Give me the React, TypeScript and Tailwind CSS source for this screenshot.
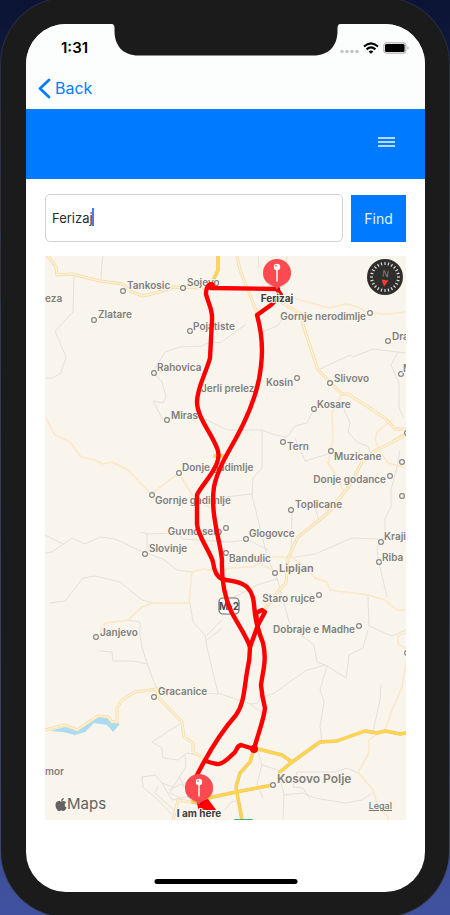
import React from "react";
import { FaApple } from "react-icons/fa";

type Place = {
  name: string;
  x: number;
  y: number;
  dot?: [number, number];
  end?: boolean;
  size?: number;
};

const places: Place[] = [
  { name: "Tankosic", x: 127, y: 289, dot: [123, 291] },
  { name: "Sojevo", x: 187, y: 286, dot: [183, 288] },
  { name: "eza", x: 45, y: 302 },
  { name: "Zlatare", x: 98, y: 318, dot: [94, 320] },
  { name: "Pojatiste", x: 193, y: 330, dot: [190, 331] },
  { name: "Rahovica", x: 157, y: 371, dot: [154, 373] },
  { name: "Jerli prelez", x: 201, y: 392 },
  { name: "Miras", x: 171, y: 419, dot: [167, 420] },
  { name: "Kosin", x: 293, y: 386, dot: [297, 378], end: true },
  { name: "Gornje nerodimlje", x: 366, y: 320, dot: [370, 313], end: true },
  { name: "Dra", x: 392, y: 340, dot: [388, 341] },
  { name: "N", x: 403, y: 372, dot: [401, 374] },
  { name: "Slivovo", x: 334, y: 382, dot: [330, 383] },
  { name: "Kosare", x: 317, y: 408, dot: [314, 409] },
  { name: "", x: 0, y: 0, dot: [407, 433] },
  { name: "Tern", x: 287, y: 450, dot: [283, 442] },
  { name: "Muzicane", x: 334, y: 460, dot: [331, 451] },
  { name: "Donje godance", x: 386, y: 483, dot: [390, 476], end: true },
  { name: "", x: 0, y: 0, dot: [402, 462] },
  { name: "", x: 0, y: 0, dot: [402, 496] },
  { name: "Toplicane", x: 295, y: 508, dot: [291, 510] },
  { name: "Glogovce", x: 249, y: 537, dot: [246, 539] },
  { name: "Bandulic", x: 229, y: 562, dot: [226, 553] },
  { name: "Guvno selo", x: 222, y: 535, dot: [226, 528], end: true },
  { name: "Lipljan", x: 279, y: 572, dot: [275, 573], size: 11 },
  { name: "Kraji", x: 384, y: 540, dot: [381, 542] },
  { name: "Riba", x: 382, y: 561, dot: [379, 562] },
  { name: "Staro rujce", x: 315, y: 602, dot: [319, 595], end: true },
  { name: "Dobraje e Madhe", x: 355, y: 633, dot: [359, 626], end: true },
  { name: "Donje gadimlje", x: 182, y: 471, dot: [179, 473] },
  { name: "Gornje gadimlje", x: 155, y: 504, dot: [152, 495] },
  { name: "Slovinje", x: 149, y: 552, dot: [145, 554] },
  { name: "Janjevo", x: 100, y: 636, dot: [96, 637] },
  { name: "Gracanice", x: 158, y: 695, dot: [154, 697] },
  { name: "mor", x: 45, y: 775 },
  { name: "Kosovo Polje", x: 277, y: 783, dot: [273, 785], size: 12 },
  { name: "", x: 0, y: 0, dot: [407, 653] },
];

const lanes = [
  "103,256 102,264 101,280",
  "74,277 73,312 55,331 66,357 61,373 52,378 45,378",
  "155,368 165,352 180,347 202,346 210,342 220,343 245,325",
  "154,373 162,382 166,397 163,403 153,401 163,420",
  "203,418 227,430 262,430 275,435 287,437 295,426 307,423 314,409",
  "45,553 52,552 72,538 85,544 100,537 115,539 143,552 163,559 177,570 192,572",
  "45,535 63,544",
  "140,532 148,534 177,533 183,539 230,542 245,540",
  "147,534 147,550",
  "50,603 65,601 83,578 95,576 120,582 142,600 153,603",
  "190,603 193,622 205,635 207,647 213,673 218,693 230,697 250,704 258,703 260,697 273,694 305,671 325,665",
  "207,635 222,620",
  "207,640 222,628",
  "128,620 140,622 140,635 142,647 147,663 157,690 218,694",
  "100,651 112,652 113,661 133,661 147,664",
  "180,724 167,732 152,742 162,748 163,758 178,760 187,753 197,755",
  "185,755 186,767 173,787 162,783 155,775 142,777 143,787 158,800 172,815",
  "158,786 155,793 176,812",
  "173,787 170,793 180,798",
  "162,783 172,800 190,796",
  "180,778 186,790 196,792",
  "170,790 181,784 188,790",
  "258,256 259,268",
  "286,315 277,326 262,332",
  "318,370 350,355 353,357 373,349 398,352 406,353",
  "398,352 391,365 399,383 399,407 403,417",
  "343,407 350,423 348,432 358,443 368,446 370,453 358,460",
  "295,438 305,461 328,454",
  "262,430 262,468 253,478 252,495 268,560 277,578 290,625",
  "225,497 252,494",
  "292,512 291,558",
  "315,507 318,518",
  "295,557 315,554 352,538 378,539",
  "277,579 257,585 225,602",
  "250,541 268,550",
  "400,450 398,463 391,490 391,507 385,518 385,535 377,548 378,558 387,597",
  "368,597 369,626 392,636 406,630",
  "295,630 314,645 317,662 327,666 346,678 349,655 363,648 368,630",
  "327,666 320,690 324,702 320,727 322,742",
  "250,704 261,712",
  "381,685 380,700 373,732",
  "257,748 262,765 257,784 263,798",
  "262,765 278,770 284,795 283,820",
  "284,795 303,793 315,798 345,803 362,800 372,793",
  "310,799 303,788 293,787 297,772 335,772 347,768 358,773",
  "225,810 231,802 236,801",
];

const paleRoads = [
  "46,418 55,435 70,442 81,457 95,460 103,464 112,462 128,470 151,494 179,473 192,495 210,508",
  "100,632 105,623 128,620 142,607 153,603 189,603 192,572 203,569 220,572 230,568 252,567 259,563 272,570",
  "259,563 265,557 288,557",
  "287,256 286,267",
  "293,298 322,306 328,308 347,304 358,307 368,313 388,314 406,312",
  "342,394 332,413 333,440 328,463 338,478 343,490",
  "392,420 377,432 375,440 380,452 388,463 406,468",
  "406,432 393,440",
  "293,558 307,568 315,578 327,582 330,590 368,595 385,600 397,610 406,610",
  "406,662 402,687 392,710 385,730",
  "377,734 369,740 369,753 358,772 373,790 378,807 388,817 388,820",
  "406,633 398,636 398,644 406,648",
];

const roads = [
  "48,256 56,267 57,275 72,274 100,281 123,284 130,291 143,296 163,291 173,287 207,288",
  "45,730 53,728 65,725 77,730 98,716 108,717 112,722 117,722 117,708 122,700 135,692 157,689 158,697 182,722 184,737 193,743 193,752 203,758",
  "237,256 240,270 257,313",
  "278,300 302,315 303,325 318,370 342,394 348,394 385,418 395,429 406,429",
  "406,435 373,452 362,462 350,485 328,513 298,537 288,558 286,583 275,595 262,613",
  "173,820 178,800 197,803",
];

const highways = [
  "218,256 218,270 212,283",
  "215,456 226,456",
  "193,802 213,797 236,792 273,785",
  "254,749 250,762 240,773 236,787 242,820",
  "254,748 282,755 292,762",
  "280,772 292,762 320,742 337,741 365,731 377,733 385,731 400,734 406,733",
];

const routes = [
  "M278 289 L211 288 L209 285 Q206 288 206 294 C208 303 213 310 212 320 L210 358 C206 373 197 388 197 402 C197 417 212 434 217 448 Q220 455 217 463 C212 476 201 486 197 495 L197 524 C198 537 210 551 213 562 C214 570 217 577 222 579 C234 582 240 581 247 587 C256 596 253 607 256 620 Q258 630 263 643 C267 660 263 670 261 685 Q262 697 265 708 C264 719 259 731 254 749 L241 745 C236 746 237 752 233 754 Q222 765 217 764 Q211 763 206 761",
  "M277 289 L281 295 L271 305 L257 315 C262 333 263 350 261 366 C259 387 250 413 235 440 C226 456 217 471 214 487 C210 513 220 540 222 560 Q221 589 231 611 C237 623 247 637 250 647 Q250 660 247 672 C244 690 244 704 236 715 C221 732 210 749 195 779",
  "M250 647 L258 625 L265 612 L262 610 L256 613 L258 628",
];

function Pin({ x, y, label, labelY }: { x: number; y: number; label: string; labelY: number }) {
  return (
    <g>
      <ellipse cx={x} cy={y + 16} rx="4" ry="1" fill="#00000030" />
      <circle cx={x} cy={y + 1} r="14" fill="#00000018" />
      <path
        d={`M${x - 14} ${y} a14 14 0 1 1 28 0 c0 7 -5 11 -10 13 q-3 1 -4 4 q-1 -3 -4 -4 c-5 -2 -10 -6 -10 -13z`}
        fill="#fd4a50"
      />
      <path d={`M${x} ${y - 4} v12`} stroke="#fff" strokeWidth="1.5" strokeLinecap="round" />
      <circle cx={x} cy={y - 6} r="3.2" fill="#fff" />
      <circle cx={x - 1} cy={y - 7} r="1" fill="#fd7a7e" />
      <text
        x={x}
        y={labelY}
        textAnchor="middle"
        fontSize="10"
        fontWeight="700"
        fill="#3b3b3d"
        stroke="#fbf7f0"
        strokeWidth="2"
        paintOrder="stroke"
      >
        {label}
      </text>
    </g>
  );
}

function MapCanvas() {
  return (
    <svg
      viewBox="45 256 361 564"
      preserveAspectRatio="xMidYMid slice"
      className="h-full w-full bg-[#f9f4ec] font-['Inter','Liberation_Sans',sans-serif]"
      role="img"
      aria-label="Route map"
    >
      <g fill="none" strokeLinejoin="round" strokeLinecap="round">
        {lanes.map((p) => (
          <polyline key={p} points={p} stroke="#e5e1da" strokeWidth="1" />
        ))}
        {paleRoads.map((p) => (
          <polyline key={p} points={p} stroke="#fbe8c6" strokeWidth="1.5" />
        ))}
        <polygon
          points="50,731 65,727 77,730 98,717 108,718 120,724 113,732 107,725 94,723 85,732 75,735 63,732"
          fill="#a9dcf0"
        />
        {roads.map((p) => (
          <polyline key={p} points={p} stroke="#f4d9ac" strokeWidth="3" />
        ))}
        {roads.map((p) => (
          <polyline key={p + "c"} points={p} stroke="#fff2cf" strokeWidth="1.6" />
        ))}
        {highways.map((p) => (
          <polyline key={p} points={p} stroke="#eec067" strokeWidth="3.4" />
        ))}
        {highways.map((p) => (
          <polyline key={p + "c"} points={p} stroke="#ffd74a" strokeWidth="2.4" />
        ))}
        <path d="M235 820 h17" stroke="#35b08c" strokeWidth="2" />
      </g>

      {places.map((p, i) => (
        <g key={i}>
          {p.dot && (
            <circle cx={p.dot[0]} cy={p.dot[1]} r="2.4" fill="#fdfbf7" stroke="#86857f" strokeWidth="1.2" />
          )}
          {p.name && (
            <text
              x={p.x}
              y={p.y}
              textAnchor={p.end ? "end" : "start"}
              fontSize={p.size ?? 10}
              fontWeight="600"
              fill="#7f7e7a"
              stroke="#fbf7f0"
              strokeWidth="2"
              paintOrder="stroke"
            >
              {p.name}
            </text>
          )}
        </g>
      ))}

      <rect x="219" y="598" width="20" height="16" rx="4" fill="#fff" stroke="#6b6a67" strokeWidth="1.2" />
      <text x="229" y="610" textAnchor="middle" fontSize="10" fontWeight="700" fill="#4a4a48">
        M-2
      </text>

      <g fill="none" stroke="#fe0000" strokeWidth="4.4" strokeLinejoin="round" strokeLinecap="round">
        {routes.map((d) => (
          <path key={d} d={d} />
        ))}
      </g>
      <g fill="#fe0000">
        <circle cx="211" cy="286" r="4" />
        <circle cx="254" cy="749" r="4" />
        <path d="M197 801 L208 799 L217 811 L206 810 L198 809z" />
      </g>

      <Pin x={277} y={273} label="Ferizaj" labelY={302} />
      <Pin x={199} y={788} label="I am here" labelY={817} />
    </svg>
  );
}

function Compass() {
  const ticks = Array.from({ length: 24 }, (_, i) => i * 15);
  return (
    <svg viewBox="0 0 36 36" className="h-9 w-9">
      <circle cx="18" cy="18" r="18" fill="#2f2e2c" />
      {ticks.map((a) => (
        <path key={a} d="M18 3 v3" stroke="#dddcd8" strokeWidth="1.2" transform={`rotate(${a} 18 18)`} />
      ))}
      <text
        x="18"
        y="18"
        textAnchor="middle"
        fontSize="9"
        fill="#8a8987"
        className="font-['Inter',sans-serif]"
        transform="rotate(8 18 18)"
      >
        N
      </text>
      <path d="M14.500 20.500 L21.500 21.500 L17 27.500z" fill="#ff3b30" />
    </svg>
  );
}

function Notch() {
  return (
    <svg viewBox="0 0 229 32" className="absolute left-1/2 top-0 h-8 w-[229px] -translate-x-1/2" aria-hidden="true">
      <path
        d="M0 0 Q3 0 3 4 V7 C3 22 12 31.500 27 31.500 H202 C217 31.500 226 22 226 7 V4 Q226 0 229 0z"
        fill="#1b1b1b"
      />
    </svg>
  );
}

function StatusIcons() {
  return (
    <div className="flex items-center gap-1" aria-hidden="true">
      <svg viewBox="0 0 19 12" className="h-3 w-[19px]" fill="#c5c6c8">
        <circle cx="2" cy="9.500" r="1.800" />
        <circle cx="7" cy="9.500" r="1.800" />
        <circle cx="12" cy="9.500" r="1.800" />
        <circle cx="17" cy="9.500" r="1.800" />
      </svg>
      <svg viewBox="0 0 16 12" className="h-3 w-4" fill="none" stroke="#000" strokeWidth="2.1">
        <path d="M1 4.600 Q8 -1.800 15 4.600" />
        <path d="M3.600 7.400 Q8 3.400 12.400 7.400" />
        <path d="M8 11.800 L5.600 9.400 Q8 7.600 10.400 9.400z" fill="#000" stroke="none" />
      </svg>
      <svg viewBox="0 0 26 12" className="h-3 w-[26px]">
        <rect x="0.800" y="0.800" width="22" height="10.400" rx="3" fill="#fff" stroke="#bfc0c1" strokeWidth="1.400" />
        <rect x="2" y="2" width="19.600" height="8" rx="1.500" fill="#000" />
        <path d="M24.300 4 q1.500 0.500 1.500 2 t-1.500 2z" fill="#bfc0c1" />
      </svg>
    </div>
  );
}

export default function App() {
  return (
    <div className="relative flex min-h-screen w-full overflow-hidden bg-linear-to-b from-[#0c1435] via-[#2c3870] to-[#40529f] font-['Inter','Liberation_Sans',sans-serif]">
      <div className="absolute left-0 top-[114px] h-[33px] w-1 bg-[#232323]" />
      <div className="absolute left-0 top-[175px] h-[58px] w-1 bg-[#232323]" />
      <div className="absolute left-0 top-[242px] h-[58px] w-1 bg-[#232323]" />
      <div className="absolute right-0 top-[175px] h-[58px] w-1 bg-[#232323]" />

      <div className="relative mx-px -my-0.5 flex flex-1 rounded-[66px] bg-[#1b1b1b] pb-[25px] pl-[25px] pr-6 pt-[26px] ring-1 ring-[#3a3d4c]/60">
        <div className="relative flex min-w-0 flex-1 flex-col overflow-hidden rounded-[40px] bg-white">
          <Notch />
          <header className="bg-[#fcfdfd]">
            <div className="flex h-[43px] items-center justify-between pl-[35px] pr-4 pt-1">
              <time className="text-[15px] font-semibold leading-5 text-black">1:31</time>
              <StatusIcons />
            </div>
            <nav className="flex h-[42px] items-center pl-3">
              <button type="button" className="flex items-center gap-1 text-base text-[#087dff]">
                <svg
                  viewBox="0 0 13 21"
                  className="h-[21px] w-[13px]"
                  fill="none"
                  stroke="currentColor"
                  strokeWidth="2.800"
                  strokeLinecap="round"
                  strokeLinejoin="round"
                >
                  <path d="M11 2 L2 10.500 L11 19" />
                </svg>
                Back
              </button>
            </nav>
          </header>

          <div className="flex h-[70px] items-center justify-end bg-[#007aff] pb-1 pr-[30px]">
            <button type="button" aria-label="Open menu" className="flex w-[17px] flex-col gap-0.5">
              <span className="h-0.5 w-full bg-[#b5d9ff]" />
              <span className="h-0.5 w-full bg-[#b5d9ff]" />
              <span className="h-0.5 w-full bg-[#b5d9ff]" />
            </button>
          </div>

          <main className="flex flex-1 flex-col px-[19px] pb-[72px] pt-[15px]">
            <form className="flex items-end gap-2 pb-3.5" onSubmit={(e) => e.preventDefault()}>
              <div className="relative min-w-0 flex-1">
                <input
                  type="text"
                  aria-label="City"
                  defaultValue="Ferizaj"
                  className="block h-12 w-full rounded-[5px] border border-[#d2d2d4] bg-white px-1.5 text-[13px] text-[#2b2b2b] outline-none"
                />
                <span className="absolute left-[47px] top-[14px] h-[18px] w-0.5 bg-[#5474f2]" />
              </div>
              <button type="submit" className="h-[47px] w-[55px] bg-[#007aff] text-sm text-[#e4f1ff]">
                Find
              </button>
            </form>

            <section className="relative min-h-[564px] grow overflow-hidden">
              <div className="absolute inset-0">
                <MapCanvas />
              </div>
              <button type="button" aria-label="Compass" className="absolute right-[3px] top-[3px]">
                <Compass />
              </button>
              <div className="absolute bottom-1.5 left-2.5 flex items-center text-[15px] leading-5 text-[#626260]">
                <FaApple className="h-[15px] w-3" />
                <span>Maps</span>
              </div>
              <a
                href="#legal"
                className="absolute bottom-1.5 right-3.5 text-[9px] font-medium leading-4 text-[#777672] underline"
              >
                Legal
              </a>
            </section>
          </main>

          <div className="absolute bottom-2 left-1/2 h-[5px] w-[143px] -translate-x-1/2 rounded-full bg-black" />
        </div>
      </div>
    </div>
  );
}
